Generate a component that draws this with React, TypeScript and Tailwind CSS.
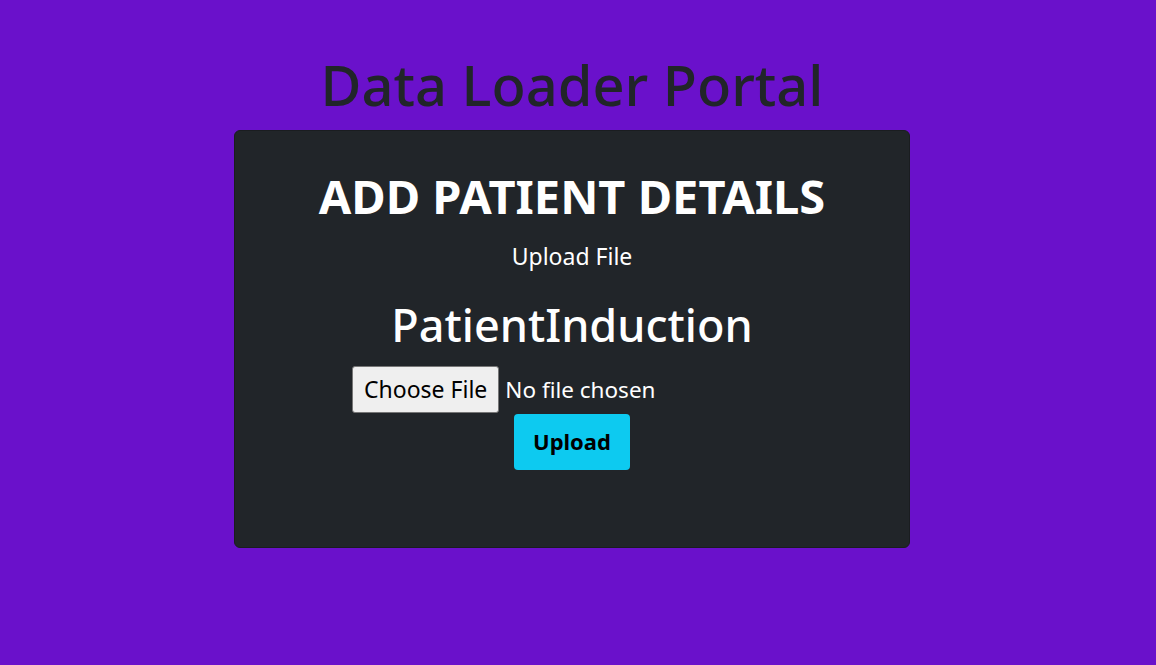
export default function App() {
  return (
    <div className="min-h-screen bg-[#6a11cb] flex flex-col items-center pt-[50px] pr-[12px] font-['Noto_Sans',sans-serif]">
      <h1 className="text-[56px] leading-[68px] text-[#212529] font-medium">Data Loader Portal</h1>

      <div className="mt-[12px] w-[676px] h-[418px] bg-[#212529] rounded-[6px] border border-[#1a1d20] flex flex-col items-center text-white pt-[37px]">
        <h2 className="text-[47px] leading-[56px] font-bold">ADD PATIENT DETAILS</h2>
        <p className="mt-[17px] text-[23px] leading-[30px]">Upload File</p>
        <h3 className="mt-[27px] text-[45px] leading-[54px] font-medium">PatientInduction</h3>

        <input
          type="file"
          className="mt-[14px] w-[440px] text-[22.5px] text-white file:mr-[6px] file:bg-[#efefef] file:text-black file:border file:border-[#767676] file:rounded-[3px] file:px-[11px] file:py-[5px] file:text-[23px]"
        />

        <button className="mt-px w-[116px] h-[56px] bg-[#0dcaf0] text-black font-bold text-[22px] rounded-[4px]">
          Upload
        </button>
      </div>
    </div>
  );
}
